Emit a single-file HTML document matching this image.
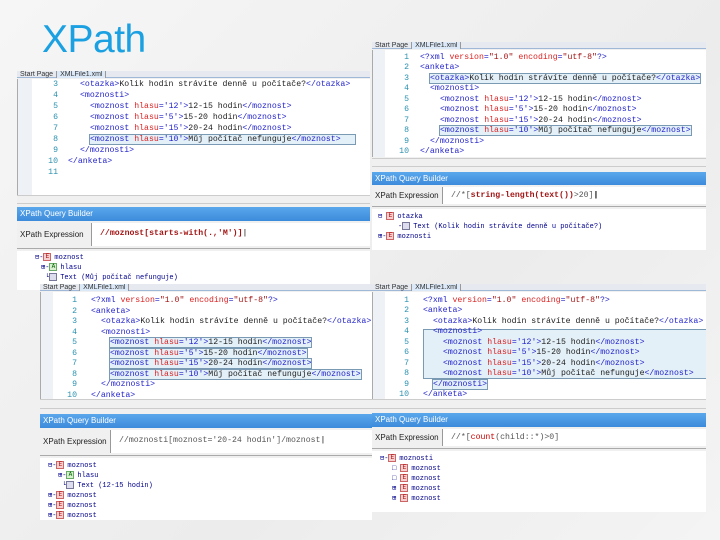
<!DOCTYPE html>
<html><head><meta charset="utf-8"><style>
*{margin:0;padding:0;box-sizing:border-box}
s{text-decoration:none}
body{width:720px;height:540px;overflow:hidden;background:linear-gradient(135deg,#f6f6f6,#ececec 60%,#f4f4f4);position:relative;font-family:"Liberation Sans",sans-serif}
.t{position:absolute;left:42px;top:18px;font-size:39px;color:#1ba1e2;letter-spacing:-0.5px}
.p{position:absolute;background:#fff;overflow:hidden}
.tabs{position:absolute;left:0;top:0;right:0;height:7px;background:#e6eaf0;font-size:7px;line-height:7px;color:#333;border-bottom:1px solid #9fb8d8;white-space:nowrap}
.tabs span{display:inline-block;padding:0 3px;border-right:1px solid #999}
.tabs span.a{background:#dbe8f7}
.ed{position:absolute;left:0;right:0;font-family:"Liberation Mono",monospace;font-size:8.2px;white-space:nowrap;background:#fff;border-left:1px solid #aaa}
.gut{position:absolute;left:0;top:0;bottom:0;background:#eef1f6}
.ln{position:absolute;left:0;right:0}
.n{position:absolute;text-align:right;color:#2b91af}
.c{position:absolute;color:#2222cc}
.c b{font-weight:normal;color:#a31515}
.c i{font-style:normal;color:#d22}
.c u{text-decoration:none;color:#222}
.hl{background:#e3f0f8;outline:1px solid #7a9ab4}
.sb{position:absolute;left:0;right:0;background:#f0f0f0;border-top:1px solid #ccc;border-bottom:1px solid #ccc}
.hd{position:absolute;left:0;right:0;background:linear-gradient(#5aa7ec,#3c8bdb);color:#fff;font-size:8px;padding-left:3px}
.ex{position:absolute;left:0;right:0;background:#f0f0f0;font-size:8px;color:#222;border-bottom:1px solid #aaa}
.ex .box{position:absolute;top:2px;bottom:2px;right:0;background:#fff;border-left:1px solid #999;font-family:"Liberation Mono",monospace;font-size:8.2px;padding-left:8px;color:#555}
.ex s{color:#a31515;font-weight:bold}
.tr{position:absolute;left:0;right:0;bottom:0;background:#fff;font-family:"Liberation Mono",monospace;font-size:7px;color:#00008b}
.tr div{position:absolute;white-space:nowrap}
.ic{display:inline-block;width:8px;height:8px;border:1px solid #c66;background:#f5d0d0;vertical-align:middle;margin-right:3px;font-size:6px;line-height:6px;text-align:center;color:#a00}
.ia{border-color:#6a6;background:#d8f0d0;color:#060}
.it{border-color:#779;background:#dde}
</style></head><body>
<div class="t">XPath</div>

<!-- Panel A -->
<div class="p" style="left:17px;top:71px;width:353px;height:219px;background:#f0f0f0">
 <div class="tabs"><span>Start Page</span><span class="a">XMLFile1.xml</span></div>
 <div class="ed" style="top:8px;height:116px">
  <div class="gut" style="width:14px"></div>
  <div class="ln" style="top:1px"><span class="n" style="left:20px;width:20px">3</span><span class="c" style="left:62px">&lt;otazka&gt;<u>Kolik hodin strávíte denně u počítače?</u>&lt;/otazka&gt;</span></div>
  <div class="ln" style="top:12px"><span class="n" style="left:20px;width:20px">4</span><span class="c" style="left:62px">&lt;moznosti&gt;</span></div>
  <div class="ln" style="top:23px"><span class="n" style="left:20px;width:20px">5</span><span class="c" style="left:72px">&lt;moznost <i>hlasu</i>='12'&gt;<u>12-15 hodin</u>&lt;/moznost&gt;</span></div>
  <div class="ln" style="top:34px"><span class="n" style="left:20px;width:20px">6</span><span class="c" style="left:72px">&lt;moznost <i>hlasu</i>='5'&gt;<u>15-20 hodin</u>&lt;/moznost&gt;</span></div>
  <div class="ln" style="top:45px"><span class="n" style="left:20px;width:20px">7</span><span class="c" style="left:72px">&lt;moznost <i>hlasu</i>='15'&gt;<u>20-24 hodin</u>&lt;/moznost&gt;</span></div>
  <div class="ln" style="top:56px"><span class="n" style="left:20px;width:20px">8</span><span class="c hl" style="left:72px;width:265px">&lt;moznost <i>hlasu</i>='10'&gt;<u>Můj počítač nefunguje</u>&lt;/moznost&gt;</span></div>
  <div class="ln" style="top:67px"><span class="n" style="left:20px;width:20px">9</span><span class="c" style="left:62px">&lt;/moznosti&gt;</span></div>
  <div class="ln" style="top:78px"><span class="n" style="left:20px;width:20px">10</span><span class="c" style="left:50px">&lt;/anketa&gt;</span></div>
  <div class="ln" style="top:89px"><span class="n" style="left:20px;width:20px">11</span></div>
 </div>
 <div class="sb" style="top:124px;height:9px"></div>
 <div class="hd" style="top:136px;height:14px;line-height:14px">XPath Query Builder</div>
 <div class="ex" style="top:150px;height:28px;line-height:28px;padding-left:3px">XPath Expression<div class="box" style="left:74px;line-height:22px"><s>//moznost[starts-with(.,'M')]</s><span style="color:#000">|</span></div></div>
 <div class="tr" style="top:180px">
  <div style="left:18px;top:2px">⊟-<span class="ic">E</span>moznost</div>
  <div style="left:24px;top:12px">⊞-<span class="ic ia">A</span>hlasu</div>
  <div style="left:28px;top:22px">└<span class="ic it"></span>Text (Můj počítač nefunguje)</div>
 </div>
</div>

<!-- Panel B -->
<div class="p" style="left:372px;top:42px;width:334px;height:208px;background:#f0f0f0">
 <div class="tabs"><span>Start Page</span><span class="a">XMLFile1.xml</span></div>
 <div class="ed" style="top:8px;height:107px">
  <div class="gut" style="width:12px"></div>
  <div class="ln" style="top:3px"><span class="n" style="left:20px;width:16px">1</span><span class="c" style="left:47px">&lt;?xml <i>version</i>=<b>"1.0"</b> <i>encoding</i>=<b>"utf-8"</b>?&gt;</span></div>
  <div class="ln" style="top:13px"><span class="n" style="left:20px;width:16px">2</span><span class="c" style="left:47px">&lt;anketa&gt;</span></div>
  <div class="ln" style="top:24px"><span class="n" style="left:20px;width:16px">3</span><span class="c hl" style="left:57px">&lt;otazka&gt;<u>Kolik hodin strávíte denně u počítače?</u>&lt;/otazka&gt;</span></div>
  <div class="ln" style="top:34px"><span class="n" style="left:20px;width:16px">4</span><span class="c" style="left:57px">&lt;moznosti&gt;</span></div>
  <div class="ln" style="top:45px"><span class="n" style="left:20px;width:16px">5</span><span class="c" style="left:67px">&lt;moznost <i>hlasu</i>='12'&gt;<u>12-15 hodin</u>&lt;/moznost&gt;</span></div>
  <div class="ln" style="top:55px"><span class="n" style="left:20px;width:16px">6</span><span class="c" style="left:67px">&lt;moznost <i>hlasu</i>='5'&gt;<u>15-20 hodin</u>&lt;/moznost&gt;</span></div>
  <div class="ln" style="top:66px"><span class="n" style="left:20px;width:16px">7</span><span class="c" style="left:67px">&lt;moznost <i>hlasu</i>='15'&gt;<u>20-24 hodin</u>&lt;/moznost&gt;</span></div>
  <div class="ln" style="top:76px"><span class="n" style="left:20px;width:16px">8</span><span class="c hl" style="left:67px">&lt;moznost <i>hlasu</i>='10'&gt;<u>Můj počítač nefunguje</u>&lt;/moznost&gt;</span></div>
  <div class="ln" style="top:87px"><span class="n" style="left:20px;width:16px">9</span><span class="c" style="left:57px">&lt;/moznosti&gt;</span></div>
  <div class="ln" style="top:97px"><span class="n" style="left:20px;width:16px">10</span><span class="c" style="left:47px">&lt;/anketa&gt;</span></div>
 </div>
 <div class="sb" style="top:116px;height:9px"></div>
 <div class="hd" style="top:130px;height:13px;line-height:13px">XPath Query Builder</div>
 <div class="ex" style="top:143px;height:22px;line-height:22px;padding-left:3px">XPath Expression<div class="box" style="left:70px;line-height:18px">//*[<s>string-length(text())</s>&gt;20]<span style="color:#000;font-weight:bold">|</span></div></div>
 <div class="tr" style="top:167px">
  <div style="left:6px;top:3px">⊟ <span class="ic">E</span>otazka</div>
  <div style="left:26px;top:13px">-<span class="ic it"></span>Text (Kolik hodin strávíte denně u počítače?)</div>
  <div style="left:6px;top:23px">⊞-<span class="ic">E</span>moznosti</div>
 </div>
</div>

<!-- Panel C -->
<div class="p" style="left:40px;top:284px;width:332px;height:236px;background:#f0f0f0">
 <div class="tabs"><span>Start Page</span><span class="a">XMLFile1.xml</span></div>
 <div class="ed" style="top:8px;height:107px">
  <div class="gut" style="width:12px"></div>
  <div class="ln" style="top:4px"><span class="n" style="left:20px;width:16px">1</span><span class="c" style="left:50px">&lt;?xml <i>version</i>=<b>"1.0"</b> <i>encoding</i>=<b>"utf-8"</b>?&gt;</span></div>
  <div class="ln" style="top:15px"><span class="n" style="left:20px;width:16px">2</span><span class="c" style="left:50px">&lt;anketa&gt;</span></div>
  <div class="ln" style="top:25px"><span class="n" style="left:20px;width:16px">3</span><span class="c" style="left:60px">&lt;otazka&gt;<u>Kolik hodin strávíte denně u počítače?</u>&lt;/otazka&gt;</span></div>
  <div class="ln" style="top:36px"><span class="n" style="left:20px;width:16px">4</span><span class="c" style="left:60px">&lt;moznosti&gt;</span></div>
  <div class="ln" style="top:46px"><span class="n" style="left:20px;width:16px">5</span><span class="c hl" style="left:69px">&lt;moznost <i>hlasu</i>='12'&gt;<u>12-15 hodin</u>&lt;/moznost&gt;</span></div>
  <div class="ln" style="top:57px"><span class="n" style="left:20px;width:16px">6</span><span class="c hl" style="left:69px">&lt;moznost <i>hlasu</i>='5'&gt;<u>15-20 hodin</u>&lt;/moznost&gt;</span></div>
  <div class="ln" style="top:67px"><span class="n" style="left:20px;width:16px">7</span><span class="c hl" style="left:69px">&lt;moznost <i>hlasu</i>='15'&gt;<u>20-24 hodin</u>&lt;/moznost&gt;</span></div>
  <div class="ln" style="top:78px"><span class="n" style="left:20px;width:16px">8</span><span class="c hl" style="left:69px">&lt;moznost <i>hlasu</i>='10'&gt;<u>Můj počítač nefunguje</u>&lt;/moznost&gt;</span></div>
  <div class="ln" style="top:88px"><span class="n" style="left:20px;width:16px">9</span><span class="c" style="left:60px">&lt;/moznosti&gt;</span></div>
  <div class="ln" style="top:99px"><span class="n" style="left:20px;width:16px">10</span><span class="c" style="left:50px">&lt;/anketa&gt;</span></div>
 </div>
 <div class="sb" style="top:115px;height:10px"></div>
 <div class="hd" style="top:130px;height:14px;line-height:14px">XPath Query Builder</div>
 <div class="ex" style="top:144px;height:28px;line-height:28px;padding-left:3px">XPath Expression<div class="box" style="left:70px;line-height:22px">//moznosti[moznost='20-24 hodin']/moznost<span style="color:#000">|</span></div></div>
 <div class="tr" style="top:174px">
  <div style="left:8px;top:3px">⊟-<span class="ic">E</span>moznost</div>
  <div style="left:18px;top:13px">⊞-<span class="ic ia">A</span>hlasu</div>
  <div style="left:22px;top:23px">└<span class="ic it"></span>Text (12-15 hodin)</div>
  <div style="left:8px;top:33px">⊞-<span class="ic">E</span>moznost</div>
  <div style="left:8px;top:43px">⊞-<span class="ic">E</span>moznost</div>
  <div style="left:8px;top:53px">⊞-<span class="ic">E</span>moznost</div>
 </div>
</div>

<!-- Panel D -->
<div class="p" style="left:372px;top:284px;width:334px;height:228px;background:#f0f0f0">
 <div class="tabs"><span>Start Page</span><span class="a">XMLFile1.xml</span></div>
 <div class="ed" style="top:8px;height:107px">
  <div class="gut" style="width:12px"></div>
  <div class="hl" style="position:absolute;left:50px;top:37px;width:284px;height:50px;outline:none;border:1px solid #7a9ab4"></div>
  <div class="ln" style="top:4px"><span class="n" style="left:20px;width:16px">1</span><span class="c" style="left:50px">&lt;?xml <i>version</i>=<b>"1.0"</b> <i>encoding</i>=<b>"utf-8"</b>?&gt;</span></div>
  <div class="ln" style="top:14px"><span class="n" style="left:20px;width:16px">2</span><span class="c" style="left:50px">&lt;anketa&gt;</span></div>
  <div class="ln" style="top:25px"><span class="n" style="left:20px;width:16px">3</span><span class="c" style="left:60px">&lt;otazka&gt;<u>Kolik hodin strávíte denně u počítače?</u>&lt;/otazka&gt;</span></div>
  <div class="ln" style="top:35px"><span class="n" style="left:20px;width:16px">4</span><span class="c" style="left:60px">&lt;moznosti&gt;</span></div>
  <div class="ln" style="top:46px"><span class="n" style="left:20px;width:16px">5</span><span class="c" style="left:70px">&lt;moznost <i>hlasu</i>='12'&gt;<u>12-15 hodin</u>&lt;/moznost&gt;</span></div>
  <div class="ln" style="top:56px"><span class="n" style="left:20px;width:16px">6</span><span class="c" style="left:70px">&lt;moznost <i>hlasu</i>='5'&gt;<u>15-20 hodin</u>&lt;/moznost&gt;</span></div>
  <div class="ln" style="top:67px"><span class="n" style="left:20px;width:16px">7</span><span class="c" style="left:70px">&lt;moznost <i>hlasu</i>='15'&gt;<u>20-24 hodin</u>&lt;/moznost&gt;</span></div>
  <div class="ln" style="top:77px"><span class="n" style="left:20px;width:16px">8</span><span class="c" style="left:70px">&lt;moznost <i>hlasu</i>='10'&gt;<u>Můj počítač nefunguje</u>&lt;/moznost&gt;</span></div>
  <div class="ln" style="top:88px"><span class="n" style="left:20px;width:16px">9</span><span class="c hl" style="left:60px">&lt;/moznosti&gt;</span></div>
  <div class="ln" style="top:98px"><span class="n" style="left:20px;width:16px">10</span><span class="c" style="left:50px">&lt;/anketa&gt;</span></div>
 </div>
 <div class="sb" style="top:115px;height:10px"></div>
 <div class="hd" style="top:129px;height:14px;line-height:14px">XPath Query Builder</div>
 <div class="ex" style="top:143px;height:22px;line-height:22px;padding-left:3px">XPath Expression<div class="box" style="left:70px;line-height:18px">//*[<span style="color:#c00">count</span>(child::*)&gt;0]</div></div>
 <div class="tr" style="top:167px">
  <div style="left:8px;top:3px">⊟-<span class="ic">E</span>moznosti</div>
  <div style="left:20px;top:13px">□ <span class="ic">E</span>moznost</div>
  <div style="left:20px;top:23px">□ <span class="ic">E</span>moznost</div>
  <div style="left:20px;top:33px">⊞ <span class="ic">E</span>moznost</div>
  <div style="left:20px;top:43px">⊞ <span class="ic">E</span>moznost</div>
 </div>
</div>
</body></html>
